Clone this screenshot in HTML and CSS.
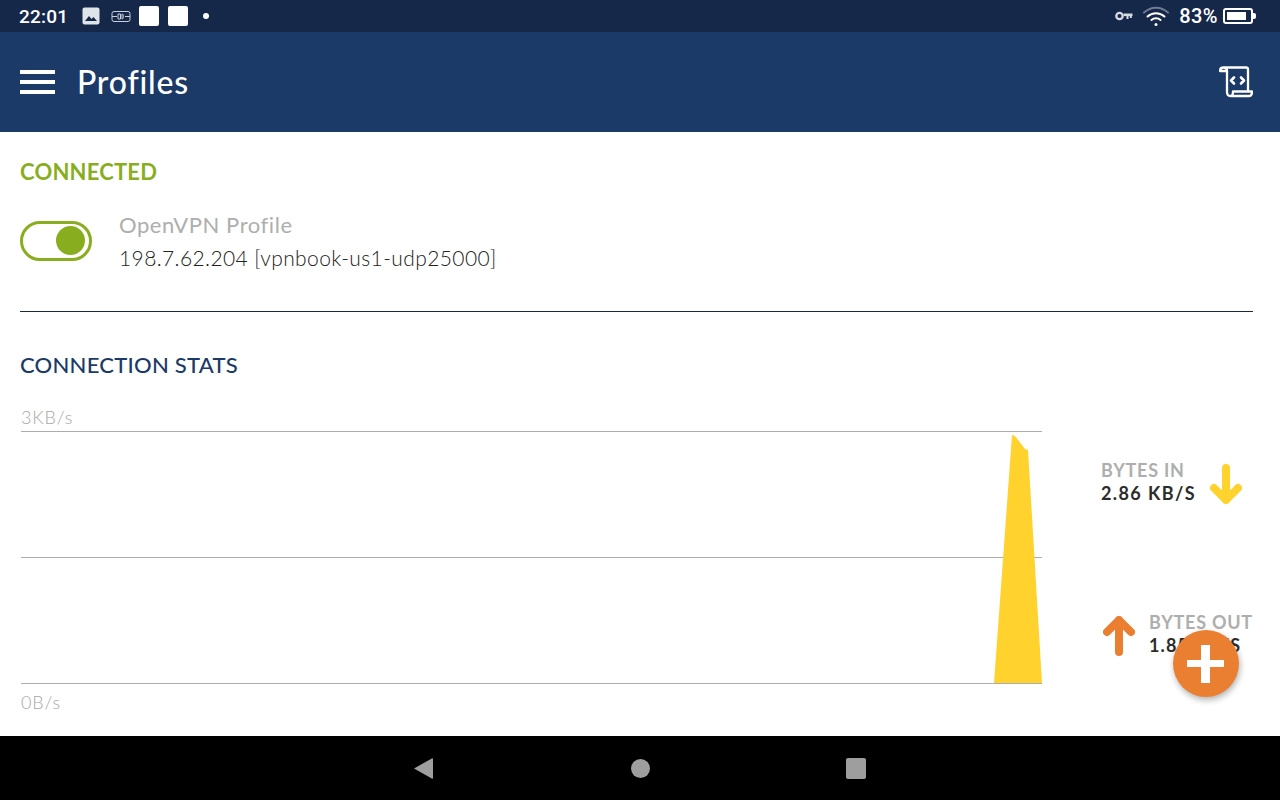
FILE: index.html
```html
<!DOCTYPE html>
<html>
<head>
    <title>Profiles</title>
    <link rel="stylesheet" href="styles.css">
</head>
<body>
    <div class="screen">
        <div class="status-bar">
            <div class="status-left">
                <span class="clock">22:01</span>
                <svg class="icon-image" viewBox="0 0 20 20"><rect x="1.5" y="1.5" width="17" height="17" rx="2" fill="#dfe3ea"/><path d="M4 15l4-5 2.5 3 2-2 3.500 4z" fill="#16284a"/></svg>
                <svg class="icon-tape" viewBox="0 0 20 12" fill="none" stroke="#c9ced8" stroke-width="1"><rect x="1" y="1" width="18" height="10" rx="2"/><path d="M1 6h5M14 6h5M7 3.500h2.500v5H7zM11 3.500c2 0 2 5 0 5z"/></svg>
                <span class="notif-box"></span>
                <span class="notif-box"></span>
                <span class="notif-dot"></span>
            </div>
            <div class="status-right">
                <svg class="icon-key" viewBox="0 0 18 10" fill="none" stroke="#d5d9e0"><circle cx="4.500" cy="5" r="3.200" stroke-width="2.300"/><path d="M8.500 3.800h9" stroke-width="2.600"/><path d="M12.500 4v4M15.800 4v3" stroke-width="2"/></svg>
                <svg class="icon-wifi" viewBox="0 0 28 22" fill="none" stroke-linecap="round" stroke-width="2"><path d="M2 7.500c7-6.500 17-6.500 24 0" stroke="#6d7a90"/><path d="M5.500 11.500c5-4.500 12-4.500 17 0M9.500 15c2.500-2.200 6.500-2.200 9 0" stroke="#fff"/><circle cx="14" cy="19.500" r="1.500" fill="#fff"/></svg>
                <span class="battery-text">83%</span>
                <span class="battery"><span class="battery-fill"></span></span>
            </div>
        </div>

        <header class="app-bar">
            <div class="menu-icon"><span></span><span></span><span></span></div>
            <h1>Profiles</h1>
            <svg class="script-icon" viewBox="0 0 34 32" fill="none" stroke="#fff" stroke-width="2.300" stroke-linejoin="round" stroke-linecap="round">
                <path d="M1 5c0-2 1.500-3.500 3.500-3.500S8 3 8 5zM4.500 1.500H27c1.200 0 2 .8 2 2v22M8 5v21c0 2.500 1.500 4 3.500 4H30c2 0 3-1.500 3-4.500H14c0 3-1 4.500-2.500 4.500"/>
                <path d="M15 11.500l-3 3 3 3M22 11.500l3 3-3 3" stroke-width="2.600"/>
            </svg>
        </header>

        <main class="content">
            <h2 class="connected-title">CONNECTED</h2>
            <div class="profile-row">
                <div class="toggle"><span class="toggle-knob"></span></div>
                <div class="profile-text">
                    <div class="profile-name">OpenVPN Profile</div>
                    <div class="profile-server">198.7.62.204 [vpnbook-us1-udp25000]</div>
                </div>
            </div>
            <hr class="divider">
            <h2 class="stats-title">CONNECTION STATS</h2>
            <div class="stats">
                <div class="chart">
                    <div class="chart-label">3KB/s</div>
                    <svg class="chart-svg" viewBox="0 0 1021 254">
                        <path d="M0 0.500H1021M0 126.500H1021" stroke="#adadad" stroke-width="1"/>
                        <path d="M973 252L991 4L994 5L1004 18L1007 19L1021 252Z" fill="#ffd22e"/>
                        <path d="M0 252.500H1021" stroke="#adadad" stroke-width="1"/>
                    </svg>
                    <div class="chart-label chart-label-bottom">0B/s</div>
                </div>
                <div class="rates">
                    <div class="rate rate-in">
                        <div class="rate-text">
                            <div class="rate-label">BYTES IN</div>
                            <div class="rate-value">2.86 KB/S</div>
                        </div>
                        <svg class="arrow" viewBox="0 0 32 40" fill="none" stroke="#ffd22e" stroke-width="8" stroke-linecap="round" stroke-linejoin="round"><path d="M16 4v32M4 24l12 12 12-12"/></svg>
                    </div>
                    <div class="rate rate-out">
                        <svg class="arrow" viewBox="0 0 32 40" fill="none" stroke="#eb7f31" stroke-width="8" stroke-linecap="round" stroke-linejoin="round"><path d="M16 36V4M4 16L16 4l12 12"/></svg>
                        <div class="rate-text">
                            <div class="rate-label">BYTES OUT</div>
                            <div class="rate-value">1.85 KB/S</div>
                        </div>
                    </div>
                </div>
            </div>
            <div class="fab"><span class="fab-h"></span><span class="fab-v"></span></div>
        </main>

        <nav class="nav-bar">
            <svg class="nav-back" viewBox="0 0 19 21"><path d="M0 10.500L17.800.4c.7-.4 1.200-.1 1.200.6v19c0 .7-.5 1-1.200.6z" fill="#9e9e9e"/></svg>
            <span class="nav-home"></span>
            <span class="nav-recent"></span>
        </nav>
    </div>
</body>
</html>
```

FILE: styles.css
```css
* { box-sizing: border-box; }
html, body { margin: 0; padding: 0; }
body { font-family: Lato, "Open Sans", sans-serif; background: #fff; }
.screen { width: 1280px; height: 800px; display: flex; flex-direction: column; overflow: hidden; }

/* status bar */
.status-bar { height: 32px; background: #16284a; color: #fff; display: flex; justify-content: space-between; align-items: center; padding: 0 27px 0 19px; font-family: Roboto, sans-serif; flex: none; }
.status-left, .status-right { display: flex; align-items: center; }
.clock { font-size: 19px; font-weight: 500; letter-spacing: 0.2px; width: 62px; }
.icon-image { width: 20px; height: 20px; margin-right: 10px; }
.icon-tape { width: 20px; height: 13px; margin-right: 8px; }
.notif-box { width: 20px; height: 20px; background: #fff; border-radius: 2px; margin-right: 9px; }
.notif-dot { width: 6px; height: 6px; background: #fff; border-radius: 50%; margin-left: 6px; }
.icon-key { width: 18px; height: 10px; margin-right: 9px; }
.icon-wifi { width: 28px; height: 22px; margin-right: 9px; }
.battery-text { font-size: 20px; font-weight: 500; letter-spacing: 0.4px; margin-right: 5px; }
.battery { width: 30px; height: 16px; border: 2px solid #fff; border-radius: 3px; padding: 2px; position: relative; }
.battery::after { content: ""; position: absolute; right: -5px; top: 3px; width: 3px; height: 6px; background: #fff; border-radius: 0 2px 2px 0; }
.battery-fill { display: block; width: 86%; height: 100%; background: #fff; }

/* app bar */
.app-bar { height: 100px; background: #1b3a68; display: flex; align-items: center; padding: 0 27px 0 20px; flex: none; box-shadow: 0 1px 2px rgba(0,0,0,0.25); position: relative; }
.menu-icon { width: 35px; display: flex; flex-direction: column; gap: 6px; margin-right: 22px; }
.menu-icon span { display: block; height: 4px; background: #fff; }
.app-bar h1 { flex: 1; margin: -2px 0 0; color: #fff; font-size: 32px; font-weight: 500; letter-spacing: 0.8px; }
.script-icon { width: 34px; height: 32px; }

/* content */
.content { flex: 1; background: #fff; padding: 0 27px 0 20px; position: relative; display: flex; flex-direction: column; }
.connected-title { margin: 26px 0 0; color: #88ae1f; font-size: 22px; line-height: 27px; font-weight: 700; letter-spacing: 0.2px; }
.profile-row { display: flex; align-items: center; margin-top: 21px; height: 70px; }
.toggle { width: 72px; height: 40px; border: 3px solid #88ae1f; border-radius: 20px; display: flex; justify-content: flex-end; align-items: center; padding-right: 4px; margin-right: 27px; margin-bottom: 1px; }
.toggle-knob { width: 29px; height: 29px; border-radius: 50%; background: #88ae1f; }
.profile-name { color: #aeaeae; font-size: 22px; line-height: 32px; letter-spacing: 0.55px; }
.profile-server { color: #222; font-size: 21px; font-weight: 300; line-height: 33px; letter-spacing: 0.4px; }
.divider { border: none; border-top: 1px solid #1b2b44; margin: 35px 0 0; }
.stats-title { margin: 39px 0 0; color: #1b3a68; font-size: 22px; line-height: 28px; font-weight: 500; letter-spacing: 0.25px; }
.stats { display: flex; flex: 1; }
.chart { width: 1022px; margin-left: 1px; flex: none; padding-top: 26px; }
.chart-label { color: #a8a8a8; font-size: 18px; font-weight: 300; line-height: 24px; letter-spacing: 0.8px; }
.chart-svg { display: block; width: 1021px; height: 254px; margin-top: 2px; }
.chart-label-bottom { margin-top: 5px; }
.rates { width: 212px; padding-left: 58px; flex: none; }
.rate { display: flex; align-items: center; }
.rate-in { margin-top: 80px; }
.rate-in .arrow { margin-left: 14px; }
.rate-out { margin-top: 106px; }
.rate-out .rate-text { margin-left: 14px; }
.rate-out .arrow { margin-left: 2px; }
.rate-out .rate-value { letter-spacing: 1.1px; }
.arrow { width: 32px; height: 40px; flex: none; margin-top: 4px; }
.rate-label { color: #aeaeae; font-size: 18px; line-height: 23px; font-weight: 700; letter-spacing: 0.75px; white-space: nowrap; }
.rate-value { color: #2c2c2c; font-size: 18px; line-height: 23px; font-weight: 700; white-space: nowrap; letter-spacing: 1.4px; }
.fab { position: absolute; left: 1173px; top: 498px; width: 66px; height: 67px; border-radius: 50%; background: #eb7f31; box-shadow: 1px 3px 6px rgba(0,0,0,0.3); }
.fab-h { position: absolute; left: 14px; top: 30px; width: 37px; height: 7px; background: #fff; }
.fab-v { position: absolute; left: 28px; top: 15px; width: 9px; height: 38px; background: #fff; }

/* nav bar */
.nav-bar { height: 64px; background: #000; flex: none; display: flex; align-items: center; padding-left: 414px; }
.nav-back { width: 19px; height: 21px; }
.nav-home { width: 19px; height: 19px; border-radius: 50%; background: #9e9e9e; margin-left: 198px; }
.nav-recent { width: 20px; height: 21px; border-radius: 2px; background: #9e9e9e; margin-left: 196px; }
```
